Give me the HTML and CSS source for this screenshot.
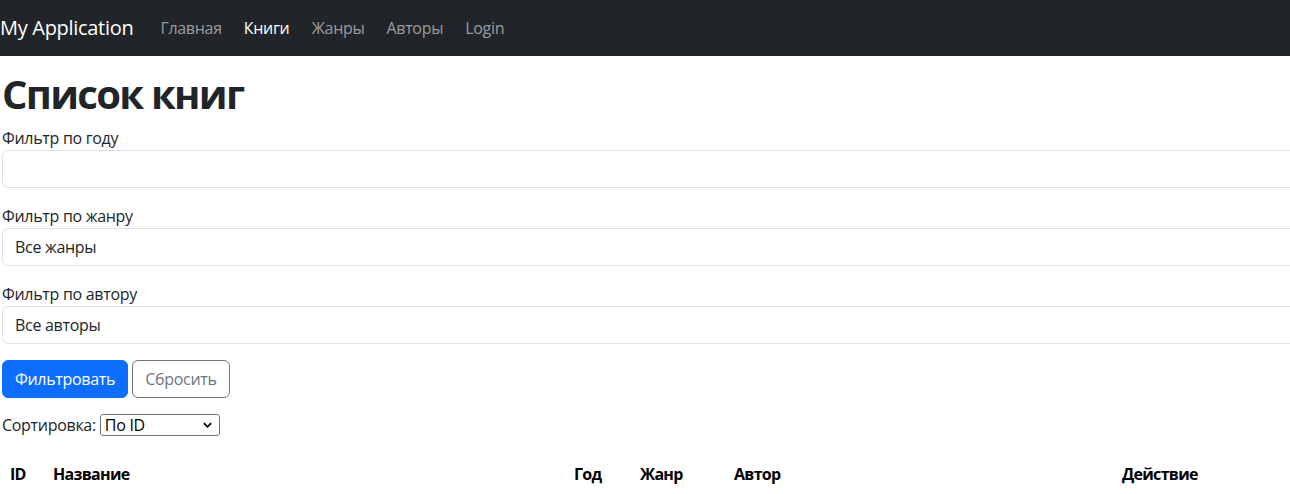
FILE: index.html
```html
<!DOCTYPE html>
<html lang="ru">
<head>
<meta charset="utf-8">
<title>Список книг</title>
<link rel="stylesheet" href="styles.css">
</head>
<body>
<nav class="navbar">
  <a class="brand" href="#">My Application</a>
  <ul class="nav">
    <li><a class="nav-link" href="#">Главная</a></li>
    <li><a class="nav-link active" href="#">Книги</a></li>
    <li><a class="nav-link" href="#">Жанры</a></li>
    <li><a class="nav-link" href="#">Авторы</a></li>
    <li><a class="nav-link" href="#">Login</a></li>
  </ul>
</nav>
<main class="content">
  <h1 class="title">Список книг</h1>
  <form class="filters">
    <div class="field">
      <label class="field-label" for="year">Фильтр по году</label>
      <input class="control" id="year" type="text">
    </div>
    <div class="field">
      <label class="field-label" for="genre">Фильтр по жанру</label>
      <div class="control select-control" id="genre">Все жанры</div>
    </div>
    <div class="field">
      <label class="field-label" for="author">Фильтр по автору</label>
      <div class="control select-control" id="author">Все авторы</div>
    </div>
    <div class="actions">
      <button class="btn btn-primary" type="button">Фильтровать</button>
      <button class="btn btn-outline" type="button">Сбросить</button>
    </div>
  </form>
  <div class="sort">
    <span class="sort-label">Сортировка:</span>
    <span class="sort-select">По ID
      <svg class="chev" viewBox="0 0 10 6" width="9" height="6"><path d="M1 1 L5 5 L9 1" fill="none" stroke="#000" stroke-width="2"/></svg>
    </span>
  </div>
  <table class="books">
    <colgroup>
      <col class="c-id"><col class="c-name"><col class="c-year"><col class="c-genre"><col class="c-author"><col class="c-action">
    </colgroup>
    <thead>
      <tr><th>ID</th><th>Название</th><th>Год</th><th>Жанр</th><th>Автор</th><th>Действие</th></tr>
    </thead>
  </table>
</main>
</body>
</html>
```
FILE: styles.css
```css
* { box-sizing: border-box; }
html, body { margin: 0; padding: 0; }
body {
  font-family: "Open Sans", "Noto Sans", sans-serif;
  font-size: 16px;
  line-height: 1.5;
  letter-spacing: -0.3px;
  color: #212529;
  background: #fff;
  overflow: hidden;
}
.navbar {
  height: 56px;
  background: #212529;
  display: flex;
  align-items: center;
}
.brand {
  color: #fff;
  font-size: 20px;
  text-decoration: none;
  margin-right: 16px;
  line-height: 30px;
}
.nav {
  list-style: none;
  margin: 0;
  padding: 0;
  display: flex;
}
.nav-link {
  display: block;
  padding: 8px 11px 8px 11px;
  color: rgba(255,255,255,.55);
  text-decoration: none;
}
.nav-link.active { color: #fff; }

.content {
  width: 1300px;
  padding-left: 2px;
}
.title {
  font-size: 40px;
  font-weight: 700;
  line-height: 1.2;
  letter-spacing: -1.7px;
  margin: 0;
  padding-top: 14px;
  height: 70px;
}
.field { margin-bottom: 16px; }
.field-label { display: block; line-height: 24px; }
.control {
  display: block;
  width: 100%;
  height: 38px;
  padding: 6px 12px;
  font: inherit;
  letter-spacing: inherit;
  color: #212529;
  border: 1px solid #dee2e6;
  border-radius: 6px;
  background: #fff;
}
.actions { display: flex; gap: 4px; margin-bottom: 17px; }
.btn {
  font: inherit;
  letter-spacing: inherit;
  padding: 6px 12px;
  border-radius: 6px;
  border: 1px solid transparent;
  line-height: 24px;
}
.btn-primary { background: #0d6efd; border-color: #0d6efd; color: #fff; }
.btn-outline { background: transparent; border-color: #6c757d; color: #6c757d; }

.sort { display: flex; align-items: center; height: 22px; margin-top: -1px; margin-bottom: 18px; }
.sort-label { margin-right: 4px; }
.sort-select {
  display: flex;
  align-items: center;
  justify-content: space-between;
  width: 120px;
  height: 22px;
  padding: 0 7px 0 4px;
  border: 1px solid #767676;
  border-radius: 3px;
  line-height: 20px;
  color: #000;
}
.chev { display: block; }

.books {
  width: 1298px;
  table-layout: fixed;
  border-collapse: collapse;
}
.c-id { width: 43px; }
.c-name { width: 521px; }
.c-year { width: 66px; }
.c-genre { width: 94px; }
.c-author { width: 388px; }
.books th {
  text-align: left;
  padding: 8px;
  font-weight: 700;
  letter-spacing: -0.7px;
  color: #000;
}
```
